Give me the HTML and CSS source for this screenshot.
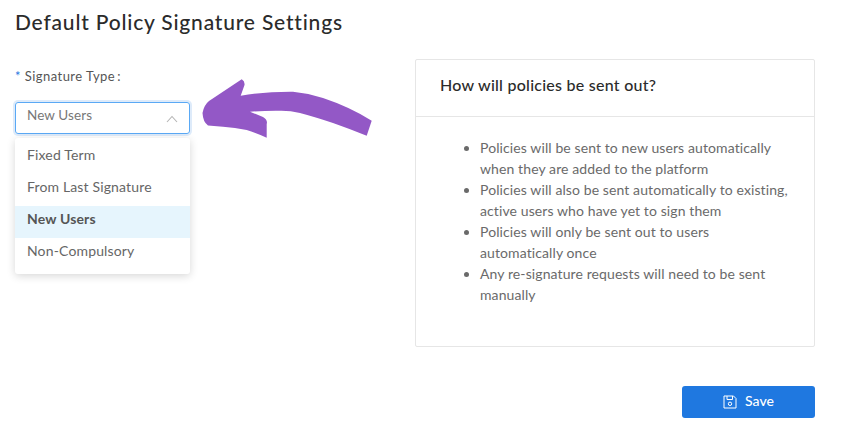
FILE: index.html
```html
<!DOCTYPE html>
<html lang="en">
<head>
<meta charset="utf-8">
<title>Default Policy Signature Settings</title>
<link rel="stylesheet" href="styles.css">
</head>
<body>
<main class="page">
  <h1 class="title">Default Policy Signature Settings</h1>
  <div class="columns">
    <section class="form">
      <div class="label"><span class="req">*</span> Signature Type<span class="colon">:</span></div>
      <div class="select">
        <span class="value">New Users</span>
        <svg class="chev" width="12" height="8" viewBox="0 0 12 8"><path d="M1 7 L6 1.5 L11 7" fill="none" stroke="#b5b5b5" stroke-width="1.1"/></svg>
        <ul class="menu">
          <li>Fixed Term</li>
          <li>From Last Signature</li>
          <li class="active">New Users</li>
          <li>Non-Compulsory</li>
        </ul>
      </div>
    </section>
    <section class="card">
      <h2 class="card-head">How will policies be sent out?</h2>
      <ul class="card-list">
        <li>Policies will be sent to new users automatically when they are added to the platform</li>
        <li>Policies will also be sent automatically to existing, active users who have yet to sign them</li>
        <li>Policies will only be sent out to users automatically once</li>
        <li>Any re-signature requests will need to be sent manually</li>
      </ul>
    </section>
  </div>
  <div class="actions">
    <button class="save" type="button">
      <svg width="14" height="14" viewBox="0 0 14 14" fill="none" stroke="#fff" stroke-width="1"><path d="M1 1 H10.5 L13 3.5 V13 H1 Z"/><path d="M4 1 V4.5 H9.5 V1"/><circle cx="7" cy="8.8" r="1.7"/></svg>
      <span class="save-text">Save</span>
    </button>
  </div>
</main>
<svg class="arrow" width="845" height="425" viewBox="0 0 845 425"><path fill="#9358c6" d="M241.7 79.3 Q245 81 244.5 85 L240.7 95.7 Q265 91.5 293 91.7 Q308 93 323 98 Q350 107 371.7 120.7 L366.7 135.7 Q350 129 333 123 Q315 117 300 113 Q290 110.5 280 110.7 Q265 110.5 250 111.7 L263 117 Q268 120 266.7 124 L266.7 137.7 Q256 133 246.7 130 Q235 127.5 223 126.7 L208 125.5 Q203 122 202.5 113 Q204 105 209 101 Z"/></svg>
</body>
</html>
```
FILE: styles.css
```css
* { box-sizing: border-box; }
html, body { margin: 0; padding: 0; background: #fff; }
body {
  font-family: "Lato", "Open Sans", sans-serif;
  color: #555;
  overflow: hidden;
  height: 425px;
}
.page { padding: 9px 30px 0 15px; display: flex; flex-direction: column; }
.title {
  margin: 0;
  font-size: 21px;
  line-height: 26px;
  font-weight: 500;
  color: #2b2b2b;
  letter-spacing: 0.8px;
}
.columns { display: flex; justify-content: space-between; align-items: flex-start; margin-top: 24px; }
.form { width: 175px; padding-top: 7px; }
.label { font-size: 13px; line-height: 20px; color: #555; letter-spacing: 0.45px; }
.req { color: #1f78e0; }
.colon { margin-left: 2px; }
.select {
  position: relative;
  margin-top: 16px;
  height: 32px;
  border: 1px solid #5aa9f5;
  border-radius: 3px;
  box-shadow: 0 0 0 2px rgba(31, 120, 224, 0.15);
  padding: 0 11px;
  font-size: 14px;
  line-height: 25px;
  color: #777;
  display: flex;
  justify-content: space-between;
}
.value { font-size: 13.5px; letter-spacing: 0.1px; }
.chev { margin-top: 12px; }
.menu {
  position: absolute;
  top: 35px;
  left: -1px;
  width: 175px;
  height: 136px;
  margin: 0;
  padding: 4px 0;
  list-style: none;
  background: #fff;
  border-radius: 3px;
  box-shadow: 0 2px 8px rgba(0, 0, 0, 0.16);
  color: #666;
  letter-spacing: 0.15px;
}
.menu li { height: 32px; line-height: 25px; padding: 0 12px; }
.menu .active { background: #e6f5fd; font-weight: 700; color: #555; }
.card { width: 400px; height: 288px; border: 1px solid #e6e6e6; border-radius: 2px; }
.card-head {
  margin: 0;
  height: 57px;
  padding: 0 24px;
  border-bottom: 1px solid #e6e6e6;
  font-size: 16px;
  font-weight: 500;
  line-height: 50px;
  color: #2b2b2b;
  letter-spacing: 0.25px;
}
.card-list {
  margin: 0;
  padding: 20px 20px 0 64px;
  font-size: 14px;
  line-height: 21px;
  color: #6a6a6a;
  letter-spacing: 0.1px;
}
.actions { display: flex; justify-content: flex-end; margin-top: 39px; }
.save {
  width: 133px;
  height: 32px;
  background: #1f78e0;
  border: 0;
  border-radius: 3px;
  color: #fff;
  font: 500 14px "Lato", sans-serif;
  letter-spacing: 0.1px;
  display: flex;
  align-items: center;
  justify-content: center;
  gap: 8px;
}
.save-text { margin-bottom: 3px; }
.arrow { position: absolute; top: 0; left: 0; pointer-events: none; }
```
